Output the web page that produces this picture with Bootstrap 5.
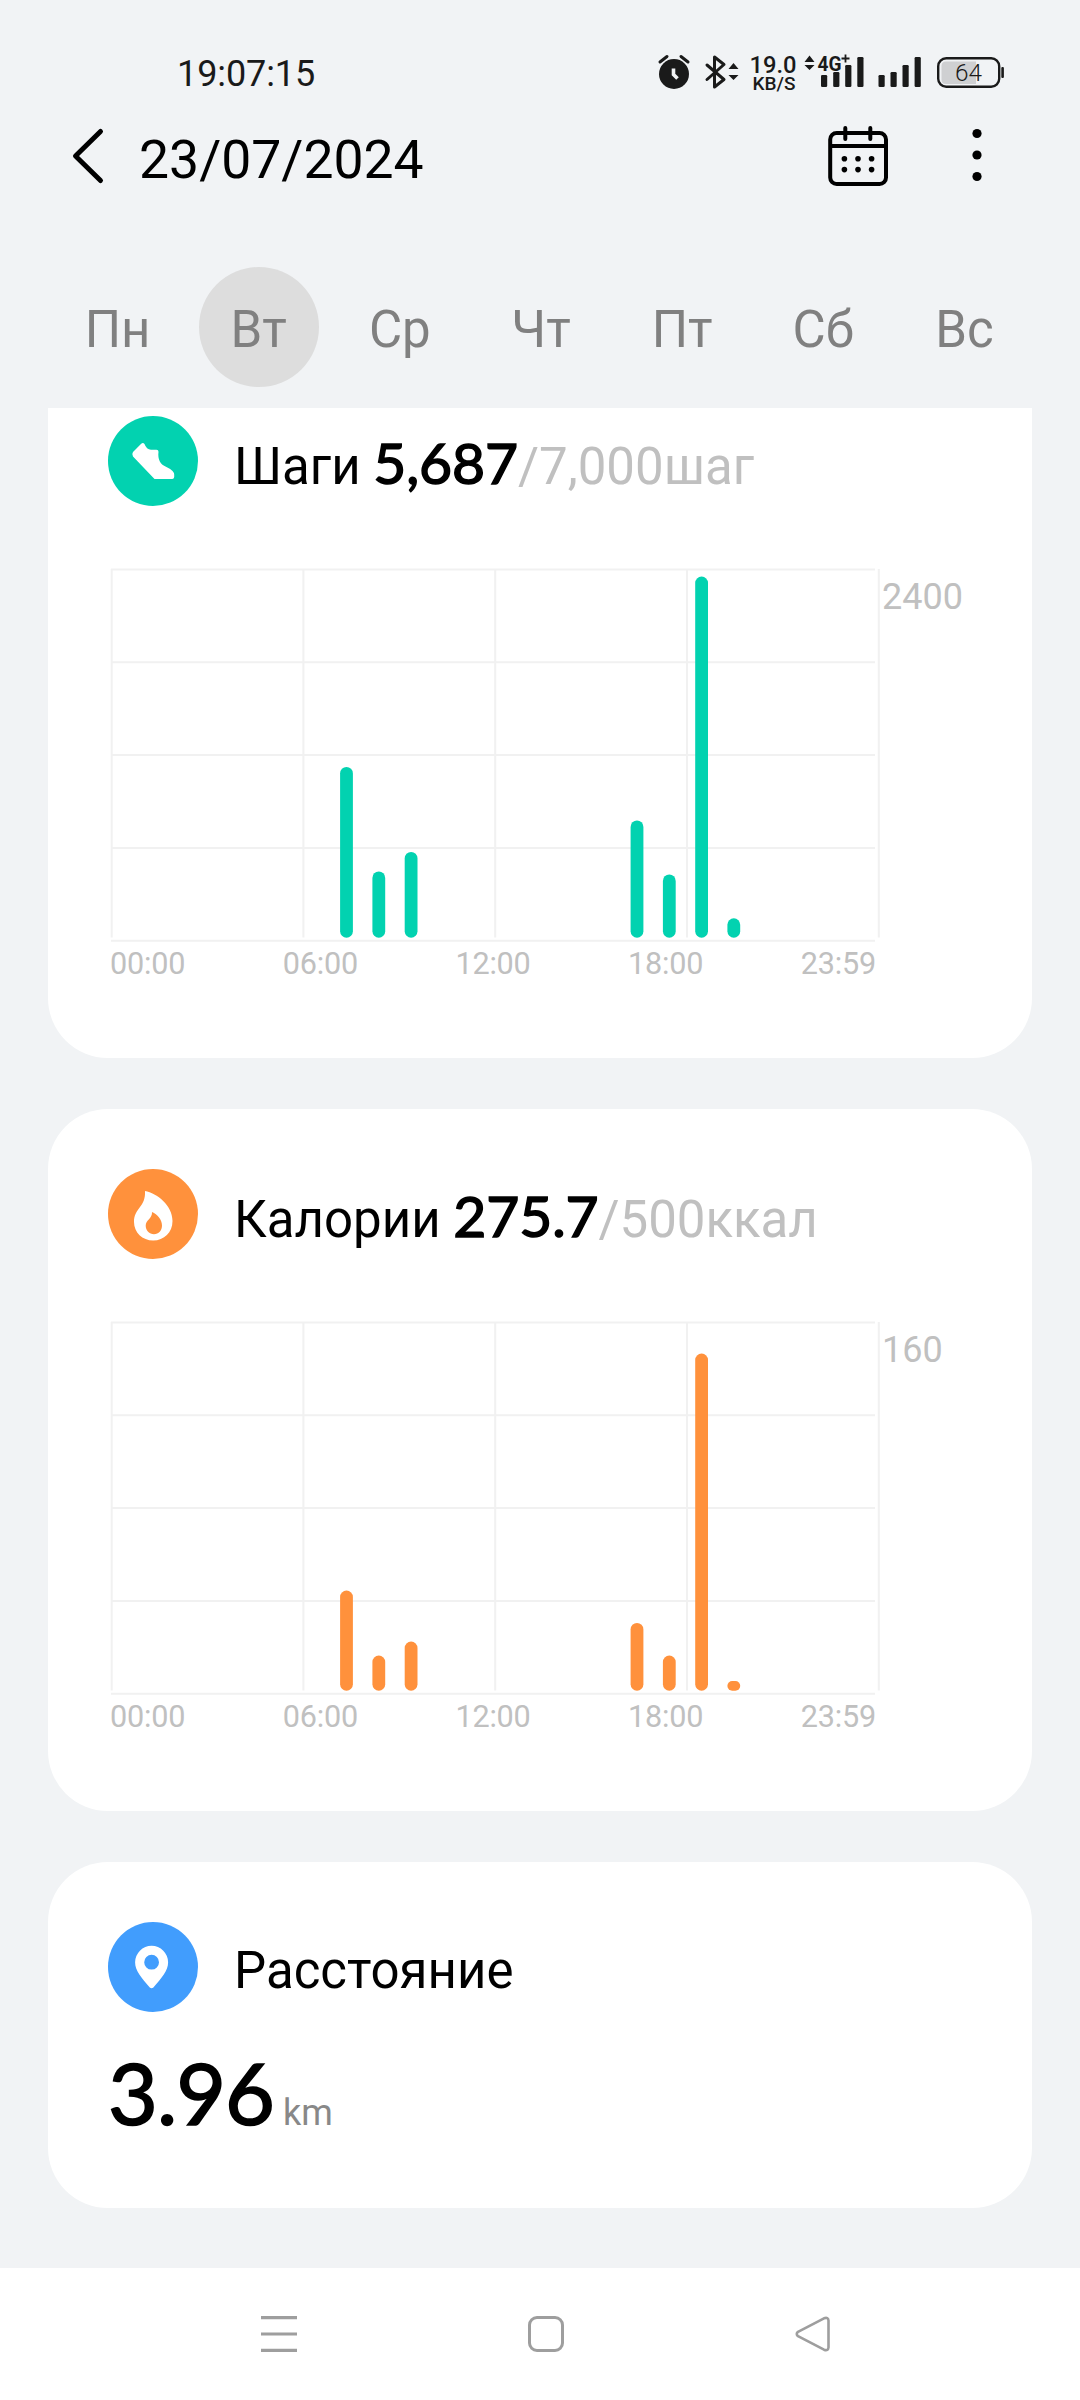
<!DOCTYPE html>
<html lang="ru">
<head>
<meta charset="utf-8">
<meta name="viewport" content="width=device-width, initial-scale=1">
<title>23/07/2024</title>
<link href="https://cdn.jsdelivr.net/npm/bootstrap@5.3.0/dist/css/bootstrap.min.css" rel="stylesheet">
<style>
  body { font-family: Roboto, "Liberation Sans", sans-serif; background: #f1f3f5; color: #000; width: 1080px; height: 2400px; overflow: hidden; }
  svg { display: block; flex: none; }
  .status-bar { height: 110px; padding: 37px 74px 0 177px; }
  .status-time { font-size: 36px; line-height: 75px; color: #1a1a1a; letter-spacing: -.1px; }
  .status-icons text { fill: #1a1a1a; font-family: Roboto, sans-serif; }
  .app-bar { height: 92px; padding: 0 98px 0 70px; }
  .app-title { font-size: 53.500px; line-height: 92px; padding-top: 7px; margin-left: 31px; }
  .kebab { margin-left: 82px; }
  .week { margin: 65px 45px 21px 47px; }
  .day { font-size: 51px; line-height: 120px; height: 120px; color: #808080; }
  .day span { display: block; width: 120px; height: 120px; padding-top: 3px; border-radius: 50%; text-align: center; }
  .day.active span { background: #dddddd; }
  .feed { padding: 0 48px; gap: 51px; }
  .tile { background: #fff; border-radius: 60px; padding: 60px 60px 77px; }
  .tile-cut { border-radius: 0 0 60px 60px; padding-top: 8px; }
  .tile-title { font-size: 51px; line-height: 90px; padding-top: 6px; margin-left: 36px; height: 90px; white-space: nowrap; }
  .tile-title b, .distance b { font-family: Lato, sans-serif; font-weight: 400; -webkit-text-stroke: 1.500px #000; }
  .tile-title b { font-size: 57px; line-height: 1; letter-spacing: -.1px; }
  .goal { color: #c0c0c0; }
  .plot { margin-top: 60px; }
  .y-max { font-size: 36px; line-height: 36px; padding-top: 13px; color: #c0c0c0; }
  .x-axis { font-size: 30.600px; letter-spacing: -.2px; line-height: 35px; color: #c0c0c0; width: 766px; margin-left: 2px; }
  .distance { margin-top: 30px; line-height: 100px; height: 99px; }
  .distance b { font-size: 86px; letter-spacing: -1px; margin-right: 5px; -webkit-text-stroke-width: 1.600px; }
  .distance span { font-size: 36px; color: #888; }
  .tile-distance { padding-bottom: 67px; }
  .sys-nav { margin-top: 60px; height: 132px; background: #fff; padding: 0 134px 0 146px; }
</style>
</head>
<body>
<div class="status-bar d-flex justify-content-between">
  <div class="status-time">19:07:15</div>
  <svg class="status-icons" width="360" height="73" viewBox="646 37 360 73" fill="#1a1a1a">
    <circle cx="674" cy="74" r="15"/>
    <path d="M660 62l7-5.500M688 62l-7-5.500" stroke="#1a1a1a" stroke-width="3" stroke-linecap="round"/>
    <path d="M673.500 68.500v6l4 4" stroke="#f1f3f5" stroke-width="3.600" fill="none"/>
    <path d="M707 65l17 14.500-9.500 7.500V57l9.500 7.500L707 79.500" fill="none" stroke="#1a1a1a" stroke-width="3" stroke-linejoin="round" stroke-linecap="round"/>
    <path d="M728.500 69l5-6 5 6zM728.500 75l5 5 5-5z"/>
    <text x="749.500" y="72.700" font-size="23.500" font-weight="500" textLength="47" lengthAdjust="spacingAndGlyphs">19.0</text>
    <text x="752.500" y="90.300" font-size="18.500" font-weight="500" textLength="43" lengthAdjust="spacingAndGlyphs">KB/S</text>
    <path d="M804.500 62l5-6.500 5 6.500zM804.500 65l5 5 5-5z"/>
    <text x="817.500" y="70.500" font-size="20" font-weight="700" textLength="24" lengthAdjust="spacingAndGlyphs">4G</text>
    <path d="M841.500 58.500h8M845.500 54.500v8" stroke="#1a1a1a" stroke-width="1.800"/>
    <rect x="821" y="75" width="6.200" height="12" rx="1.300"/><rect x="833.200" y="72" width="6.200" height="15" rx="1.300"/>
    <rect x="845.200" y="65" width="6.200" height="22" rx="1.300"/><rect x="857.300" y="57" width="6.200" height="30" rx="1.300"/>
    <rect x="878.500" y="75" width="6.200" height="12" rx="1.300"/><rect x="890.500" y="72" width="6.200" height="15" rx="1.300"/>
    <rect x="902.500" y="65" width="6.200" height="22" rx="1.300"/><rect x="914.600" y="57" width="6.200" height="30" rx="1.300"/>
    <path d="M946 61.500h30v22.500h-30q-4.500 0-4.500-4.500v-13.500q0-4.500 4.500-4.500z" fill="#cfd0d2"/>
    <rect x="938.200" y="58.200" width="61" height="28.600" rx="8" fill="none" stroke="#1a1a1a" stroke-width="2.400"/>
    <rect x="1001.300" y="67" width="2.600" height="11" rx="1"/>
    <text x="955" y="80.800" font-size="23.500" font-weight="300" textLength="27" lengthAdjust="spacingAndGlyphs">64</text>
  </svg>
</div>

<header class="app-bar d-flex align-items-center">
  <svg width="38" height="60" viewBox="70 126 38 60"><path d="M100.500 131.500L75.500 156l25 24.500" fill="none" stroke="#000" stroke-width="5" stroke-linecap="round" stroke-linejoin="round"/></svg>
  <div class="app-title me-auto">23/07/2024</div>
  <svg width="64" height="64" viewBox="826 124 64 64" fill="none" stroke="#000" stroke-width="4">
    <rect x="830.200" y="133" width="55.800" height="51" rx="6.500"/>
    <path d="M830 146h56"/><path d="M845.300 128v11M870.300 128v11" stroke-linecap="round"/>
    <g fill="#000" stroke="none"><circle cx="844.400" cy="158.700" r="2.800"/><circle cx="858" cy="158.700" r="2.800"/><circle cx="871.600" cy="158.700" r="2.800"/><circle cx="844.400" cy="169.600" r="2.800"/><circle cx="858" cy="169.600" r="2.800"/><circle cx="871.600" cy="169.600" r="2.800"/></g>
  </svg>
  <svg class="kebab" width="10" height="56" viewBox="0 0 10 56"><circle cx="5" cy="5.500" r="4.600"/><circle cx="5" cy="27" r="4.600"/><circle cx="5" cy="48.500" r="4.600"/></svg>
</header>

<nav class="week row g-0">
  <div class="day col d-flex justify-content-center"><span>Пн</span></div>
  <div class="day active col d-flex justify-content-center"><span>Вт</span></div>
  <div class="day col d-flex justify-content-center"><span>Ср</span></div>
  <div class="day col d-flex justify-content-center"><span>Чт</span></div>
  <div class="day col d-flex justify-content-center"><span>Пт</span></div>
  <div class="day col d-flex justify-content-center"><span>Сб</span></div>
  <div class="day col d-flex justify-content-center"><span>Вс</span></div>
</nav>

<svg width="0" height="0" class="position-absolute" aria-hidden="true">
  <symbol id="grid" viewBox="0 0 774 380">
    <path d="M3 3.500H767M3 96.300H767M3 189.100H767M3 281.900H767M3 374.700H767M3.700 3v368.500M195.400 3v368.500M387.200 3v368.500M579 3v368.500M770.800 3v368.500" stroke="#f1f1f1" stroke-width="2" fill="none"/>
  </symbol>
</svg>

<main class="feed d-flex flex-column">
  <section class="tile tile-cut">
    <div class="d-flex">
      <svg width="90" height="90" viewBox="0 0 90 90"><circle cx="45" cy="45" r="45" fill="#02d2b0"/><path fill="#fff" d="M33.200 27.800q1.800-1.500 3.300.200 2 5.500 6.500 5.800h5.500q2 0 2 2c-1 8 2 12.500 7 14.800q8.500 4 8.700 8v2.400q-.2 2-2 2H46.500L25 40.500q-1.500-2.500 0-4.600z"/></svg>
      <div class="tile-title">Шаги <b>5,687</b><span class="goal">/7,000шаг</span></div>
    </div>
    <div class="plot d-flex">
      <svg width="774" height="380" viewBox="0 0 774 380"><use href="#grid"/>
        <g fill="#02d2b0">
          <rect x="232.100" y="201" width="12.800" height="170.700" rx="6.400"/>
          <rect x="264.400" y="305.500" width="12.800" height="66.200" rx="6.400"/>
          <rect x="296.700" y="286" width="12.800" height="85.700" rx="6.400"/>
          <rect x="522.600" y="254.500" width="12.800" height="117.200" rx="6.400"/>
          <rect x="554.900" y="308.500" width="12.800" height="63.200" rx="6.400"/>
          <rect x="587.200" y="10.600" width="12.800" height="361.100" rx="6.400"/>
          <rect x="619.400" y="352.300" width="12.800" height="19.400" rx="6.400"/>
        </g>
      </svg>
      <div class="y-max">2400</div>
    </div>
    <div class="x-axis d-flex justify-content-between"><span>00:00</span><span>06:00</span><span>12:00</span><span>18:00</span><span>23:59</span></div>
  </section>

  <section class="tile">
    <div class="d-flex">
      <svg width="90" height="90" viewBox="0 0 90 90"><circle cx="45" cy="45" r="45" fill="#ff913c"/><path fill="#fff" d="M37 22c12 2.500 27.500 14 27.500 30 0 11.500-8.500 19.500-19.300 19.500S26 63.500 26 53c0-14 12-15 11-31z"/><path fill="#ff913c" d="M44 43c5.500 2.500 10 7.500 10 13.500 0 5-3.300 8.700-8 8.700s-8.300-3.700-8.300-8.400c0-5.800 6.800-7.300 6.300-13.800z"/></svg>
      <div class="tile-title">Калории <b>275.7</b><span class="goal">/500ккал</span></div>
    </div>
    <div class="plot d-flex">
      <svg width="774" height="380" viewBox="0 0 774 380"><use href="#grid"/>
        <g fill="#ff913c">
          <rect x="232.100" y="271.600" width="12.800" height="100.100" rx="6.400"/>
          <rect x="264.400" y="336.600" width="12.800" height="35.100" rx="6.400"/>
          <rect x="296.700" y="322.600" width="12.800" height="49.100" rx="6.400"/>
          <rect x="522.600" y="304" width="12.800" height="67.700" rx="6.400"/>
          <rect x="554.900" y="336.600" width="12.800" height="35.100" rx="6.400"/>
          <rect x="587.200" y="34.600" width="12.800" height="337.100" rx="6.400"/>
          <rect x="619.400" y="362" width="12.800" height="9.700" rx="4.800"/>
        </g>
      </svg>
      <div class="y-max">160</div>
    </div>
    <div class="x-axis d-flex justify-content-between"><span>00:00</span><span>06:00</span><span>12:00</span><span>18:00</span><span>23:59</span></div>
  </section>

  <section class="tile tile-distance">
    <div class="d-flex">
      <svg width="90" height="90" viewBox="0 0 90 90"><circle cx="45" cy="45" r="45" fill="#419dfd"/><path fill="#fff" fill-rule="evenodd" d="M43.600 23.800a16.500 16.500 0 0 1 16.500 16.500c0 9-6.500 15.500-14.700 25.200q-1.800 1.600-3.600 0C33.600 55.800 27.100 49.300 27.100 40.300a16.500 16.500 0 0 1 16.500-16.500zm0 9a7.400 7.400 0 1 0 0 14.800 7.400 7.400 0 0 0 0-14.800z"/></svg>
      <div class="tile-title pt-1">Расстояние</div>
    </div>
    <div class="distance"><b>3.96</b><span class="ms-1">km</span></div>
  </section>
</main>

<footer class="sys-nav d-flex align-items-center">
  <div class="col d-flex justify-content-center"><svg width="36" height="36" viewBox="0 0 36 36"><path d="M0 1.600h36M0 18h36M0 34.400h36" stroke="#9e9e9e" stroke-width="3.200"/></svg></div>
  <div class="col d-flex justify-content-center"><svg width="36" height="36" viewBox="0 0 36 36"><rect x="1.500" y="1.500" width="33" height="33" rx="7.500" fill="none" stroke="#9e9e9e" stroke-width="3"/></svg></div>
  <div class="col d-flex justify-content-center"><svg width="36" height="36" viewBox="0 0 36 36"><path d="M29 2.300L3 15.800q-2.500 2.200 0 4.400L29 33.700q4.200 1.500 4.500-2.200v-27q-.3-3.700-4.500-2.200z" fill="none" stroke="#9e9e9e" stroke-width="2.600" stroke-linejoin="round"/></svg></div>
</footer>
<script src="https://cdn.jsdelivr.net/npm/bootstrap@5.3.0/dist/js/bootstrap.bundle.min.js"></script>
</body>
</html>
